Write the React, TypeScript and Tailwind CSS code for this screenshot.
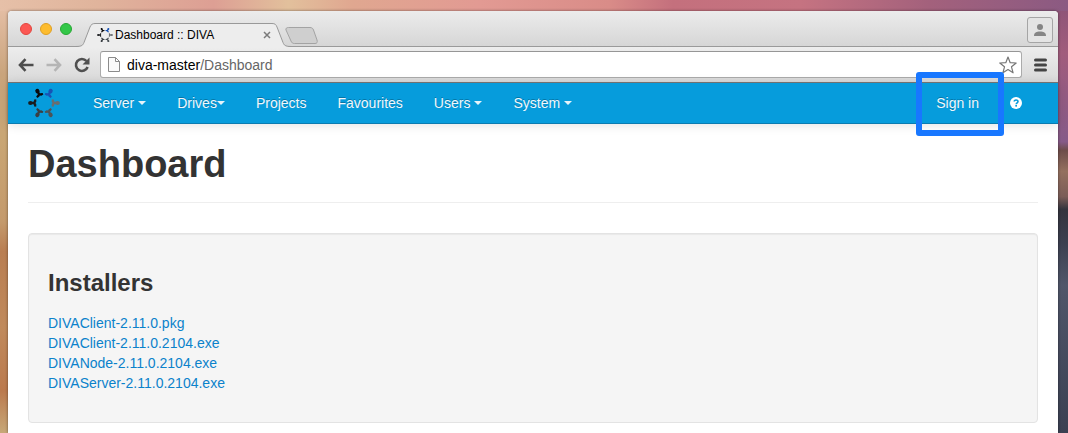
import type { ReactNode } from "react";

const people = [
  { angle: -29, color: "#0b0b0d" },
  { angle: 29, color: "#1853b5" },
  { angle: 90, color: "#6a6d70" },
  { angle: 151, color: "#4c5357" },
  { angle: 209, color: "#3a3f44" },
  { angle: 270, color: "#1a1c1f" },
];

function Logo({ className }: { className: string }) {
  return (
    <svg viewBox="-16 -16 32 32" className={className} aria-hidden="true">
      {people.map((p) => (
        <g key={p.angle} transform={`rotate(${p.angle}) translate(0 -11.500)`} fill={p.color}>
          <ellipse cx="0" cy="-2" rx="2.100" ry="2.400" />
          <path d="M-.9-.5H.9L1.300 1 3.700 2 3.500 3.800H1.200L0 3 -1.200 3.800H-3.500L-3.700 2-1.300 1z" />
        </g>
      ))}
    </svg>
  );
}

function Wallpaper() {
  return (
    <svg
      viewBox="0 0 1068 433"
      preserveAspectRatio="none"
      className="absolute inset-0 h-full w-full"
      aria-hidden="true"
    >
      <defs>
        <linearGradient id="sky" x1="0" x2="1" y1="0" y2="0">
          <stop offset="0" stopColor="#e6c0a8" />
          <stop offset=".09" stopColor="#e0b49c" />
          <stop offset=".2" stopColor="#dd9f94" />
          <stop offset=".27" stopColor="#e2c09c" />
          <stop offset=".33" stopColor="#e0a790" />
          <stop offset=".45" stopColor="#e29a93" />
          <stop offset=".57" stopColor="#d98c88" />
          <stop offset=".63" stopColor="#c4707d" />
          <stop offset=".75" stopColor="#c57381" />
          <stop offset=".87" stopColor="#a3617c" />
          <stop offset="1" stopColor="#8b5a82" />
        </linearGradient>
        <linearGradient id="left" x1="0" x2="0" y1="0" y2="1">
          <stop offset="0" stopColor="#e3bda3" />
          <stop offset=".15" stopColor="#c9a47c" />
          <stop offset=".3" stopColor="#c9a674" />
          <stop offset=".5" stopColor="#c49a6c" />
          <stop offset=".57" stopColor="#b97e52" />
          <stop offset=".75" stopColor="#c08a5c" />
          <stop offset=".9" stopColor="#bb7a4e" />
          <stop offset="1" stopColor="#c7a878" />
        </linearGradient>
        <linearGradient id="right" x1="0" x2="0" y1="0" y2="1">
          <stop offset="0" stopColor="#8f5578" />
          <stop offset=".1" stopColor="#a15c7c" />
          <stop offset=".31" stopColor="#865a88" />
          <stop offset=".33" stopColor="#6e4c4a" />
          <stop offset=".38" stopColor="#94705f" />
          <stop offset=".44" stopColor="#7b5d58" />
          <stop offset=".47" stopColor="#34343e" />
          <stop offset=".55" stopColor="#3c4050" />
          <stop offset=".65" stopColor="#50566a" />
          <stop offset="1" stopColor="#3b4052" />
        </linearGradient>
      </defs>
      <rect width="1068" height="433" fill="url(#sky)" />
      <rect y="11" width="9" height="422" fill="url(#left)" />
      <rect x="1057" y="11" width="11" height="422" fill="url(#right)" />
    </svg>
  );
}

function NavItem({ children, caret, tight }: { children: ReactNode; caret?: boolean; tight?: boolean }) {
  return (
    <li>
      <a href="#" className="flex items-center px-[15px] py-[10px] leading-5">
        {children}
        {caret && (
          <span
            className={
              tight
                ? "border-x-4 border-t-4 border-x-transparent border-t-[#e6f3fa]"
                : "ml-1 border-x-4 border-t-4 border-x-transparent border-t-[#e6f3fa]"
            }
          />
        )}
      </a>
    </li>
  );
}

function TabStrip() {
  return (
    <div className="relative flex h-9 items-end border-b border-[#9a9a9a] bg-linear-to-b from-[#ececec] to-[#d6d6d6]">
      <div className="flex gap-2 self-center pl-3">
        <button aria-label="Close window" className="size-3 rounded-full border border-[#e2463f] bg-[#fc5753]" />
        <button aria-label="Minimise window" className="size-3 rounded-full border border-[#dfa023] bg-[#fdbc2e]" />
        <button aria-label="Zoom window" className="size-3 rounded-full border border-[#27a833] bg-[#33c748]" />
      </div>
      <div className="relative -mb-px ml-1 h-6 w-[222px]">
        <svg viewBox="0 0 222 25" className="absolute inset-0 h-[25px] w-full" aria-hidden="true">
          <path
            d="M0 23.500C6 23.500 7 22 8 19.500L14 4C15 1.500 16.500 .5 19 .5H196C199 .5 200 1.500 201 4L207 19.500C208 22 209 23.500 215 23.500V25H0z"
            fill="#ededed"
          />
          <path
            d="M0 23.500C6 23.500 7 22 8 19.500L14 4C15 1.500 16.500 .5 19 .5H196C199 .5 200 1.500 201 4L207 19.500C208 22 209 23.500 215 23.500"
            fill="none"
            stroke="#999"
          />
        </svg>
        <div className="relative flex h-full items-center pr-[27px] pl-[21px] text-[12px] text-black">
          <Logo className="size-4" />
          <span className="ml-[2px] flex-1 whitespace-nowrap">Dashboard :: DIVA</span>
          <button aria-label="Close tab">
            <svg viewBox="0 0 8 8" className="size-2" aria-hidden="true">
              <path d="M1 1l6 6M7 1L1 7" stroke="#7b7b7b" strokeWidth="1.500" />
            </svg>
          </button>
        </div>
      </div>
      <button aria-label="New tab" className="mb-[2px] -ml-[13px]">
        <svg viewBox="0 0 33 17" className="h-[17px] w-[33px]" aria-hidden="true">
          <path
            d="M3.500 .5H25C27 .5 28 1.500 28.500 3L32 13C32.700 15.500 32 16.500 30 16.500H9.500C7.500 16.500 6.500 15.500 6 14L1 3C.5 1.500 1.500 .5 3.500 .5z"
            fill="#cfcfcf"
            stroke="#a3a3a3"
          />
        </svg>
      </button>
      <button
        aria-label="Profile"
        className="mr-[5px] mb-[3px] ml-auto flex size-[26px] items-center justify-center rounded-[3px] border border-[#a5a5a5] bg-[#e4e4e4]"
      >
        <svg viewBox="0 0 12 12" className="size-3" fill="#858585" aria-hidden="true">
          <circle cx="6" cy="3" r="3" />
          <path d="M0 12c0-3.500 2.500-4.500 6-4.500s6 1 6 4.500z" />
        </svg>
      </button>
    </div>
  );
}

function Toolbar() {
  return (
    <div className="flex h-9 items-center border-b border-[#777] bg-linear-to-b from-[#ededed] to-[#d9d9d9] pr-[11px] pl-[10px]">
      <button aria-label="Back">
        <svg viewBox="0 0 16 14" className="h-[14px] w-4" fill="none" stroke="#4d4d4d" strokeWidth="2.600" aria-hidden="true">
          <path d="M15.500 7H2M7.500 1.200L2 7l5.500 5.800" />
        </svg>
      </button>
      <button aria-label="Forward" className="ml-3">
        <svg viewBox="0 0 16 14" className="h-[14px] w-4" fill="none" stroke="#b5b5b5" strokeWidth="2.600" aria-hidden="true">
          <path d="M.5 7h13.500M8.500 1.200l5.500 5.800-5.500 5.800" />
        </svg>
      </button>
      <button aria-label="Reload" className="ml-3">
        <svg viewBox="0 0 16 16" className="size-4" aria-hidden="true">
          <path d="M12.500 4A6 6 0 1 0 13.600 10" fill="none" stroke="#505050" strokeWidth="2.600" />
          <path d="M15.500 .5v7h-7z" fill="#505050" />
        </svg>
      </button>
      <div className="ml-[10px] flex h-[27px] flex-1 items-center rounded-[3px] border border-[#ababab] border-t-[#969696] bg-white pr-1 pl-[7px]">
        <svg viewBox="0 0 12 15" className="h-[15px] w-3" fill="#fafafa" stroke="#8b8b8b" aria-hidden="true">
          <path d="M.5 .5H7.500l4 4v10H.5zM7.500 .5v4h4" />
        </svg>
        <label htmlFor="address" className="ml-[7px] text-[14px] leading-5 text-black">
          diva-master
        </label>
        <input
          id="address"
          type="text"
          defaultValue="/Dashboard"
          className="min-w-0 flex-1 bg-transparent text-[14px] leading-5 text-[#666] outline-none"
        />
        <button aria-label="Bookmark this page">
          <svg viewBox="0 0 18 18" className="size-[18px]" fill="#fff" stroke="#777" strokeWidth="1.200" strokeLinejoin="round" aria-hidden="true">
            <path d="M9 1l2.200 5.700 6 .3-4.700 3.800 1.600 6L9 13.500l-5.100 3.300 1.600-6L.8 7l6-.3z" />
          </svg>
        </button>
      </div>
      <button aria-label="Menu" className="ml-3">
        <svg viewBox="0 0 13 14" className="h-[14px] w-[13px]" stroke="#444" strokeWidth="3" strokeLinecap="round" aria-hidden="true">
          <path d="M1.500 2h10M1.500 7h10M1.500 12h10" />
        </svg>
      </button>
    </div>
  );
}

const installers = [
  "DIVAClient-2.11.0.pkg",
  "DIVAClient-2.11.0.2104.exe",
  "DIVANode-2.11.0.2104.exe",
  "DIVAServer-2.11.0.2104.exe",
];

export default function App() {
  return (
    <div className="relative flex min-h-screen flex-col pt-[11px] pr-[10px] pl-2 font-['Liberation_Sans',Arial,sans-serif] text-[14px] leading-5">
      <Wallpaper />
      <div className="relative flex flex-1 flex-col rounded-t-[4px] bg-white shadow-[0_0_3px_rgba(0,0,0,0.5)]">
        <div className="overflow-hidden rounded-t-[4px]">
          <TabStrip />
          <Toolbar />
        </div>
        <nav className="flex h-[41px] items-center border-b border-[#0a7bb0] bg-[#069cdc] pl-5 text-[#f0f8fc] shadow-[0_1px_10px_rgba(0,0,0,0.12)] [text-shadow:0_-1px_0_rgba(0,0,0,0.25)]">
          <a href="#" aria-label="Home">
            <Logo className="size-8" />
          </a>
          <ul className="ml-[18px] flex gap-px">
            <NavItem caret>Server</NavItem>
            <NavItem caret tight>Drives</NavItem>
            <NavItem>Projects</NavItem>
            <NavItem>Favourites</NavItem>
            <NavItem caret>Users</NavItem>
            <NavItem caret>System</NavItem>
          </ul>
          <ul className="mr-[21px] ml-auto flex items-center gap-px">
            <li className="relative">
              <a href="#" className="block px-[15px] py-[10px]">Sign in</a>
              <span className="pointer-events-none absolute -top-[11px] -right-[10px] -bottom-[13px] -left-[5px] z-10 rounded-[3px] border-6 border-[#1877ff]" />
            </li>
            <li>
              <a href="#" aria-label="Help" className="block px-[15px] py-[10px]">
                <svg viewBox="0 0 12 12" className="size-3" aria-hidden="true">
                  <circle cx="6" cy="6" r="6" fill="#fff" />
                  <path d="M4.200 4.600C4.200 2.400 8 2.400 8 4.500 8 5.800 6.200 5.800 6.200 7.200" fill="none" stroke="#069cdc" strokeWidth="1.600" />
                  <rect x="5.300" y="8" width="1.700" height="1.600" fill="#069cdc" />
                </svg>
              </a>
            </li>
          </ul>
        </nav>
        <main className="px-5 pb-[10px]">
          <h1 className="border-b border-[#eee] pt-5 pb-[18px] text-[38px] leading-10 font-bold text-[#333]">
            Dashboard
          </h1>
          <section className="mt-[30px] rounded-[4px] border border-[#e3e3e3] bg-[#f5f5f5] px-[19px] pt-[29px] pb-[29px] shadow-[inset_0_1px_1px_rgba(0,0,0,0.05)]">
            <h2 className="text-[24px] leading-10 font-bold text-[#333]">Installers</h2>
            <ul className="mt-[10px] text-[#0b82cb]">
              {installers.map((name) => (
                <li key={name}>
                  <a href="#">{name}</a>
                </li>
              ))}
            </ul>
          </section>
        </main>
      </div>
    </div>
  );
}
